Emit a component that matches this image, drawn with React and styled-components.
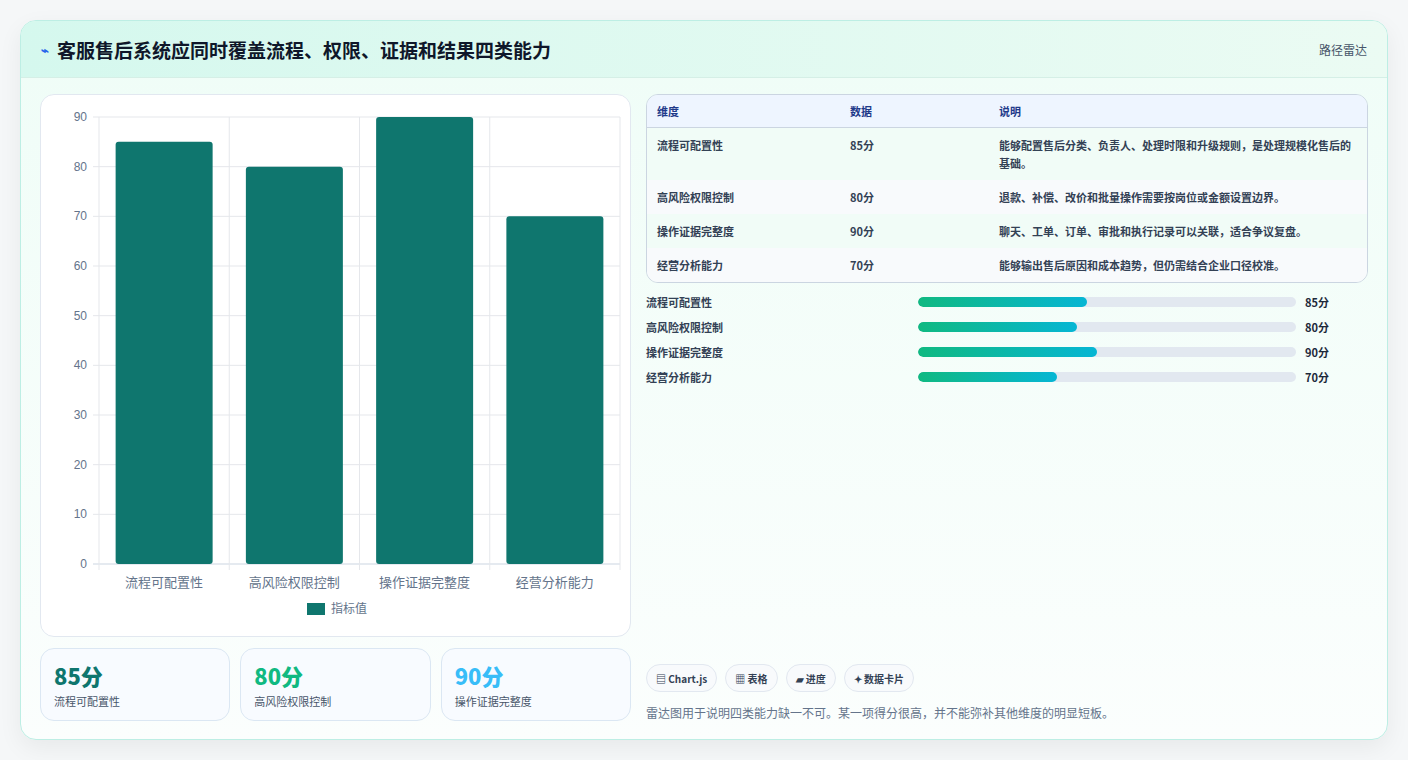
import React from "react";
import styled, { createGlobalStyle } from "styled-components";

const Global = createGlobalStyle`
  body { margin: 0; background: #f5f7f8; font-family: "Noto Sans CJK SC", "Noto Sans", sans-serif; }
`;

const rows = [
  { name: "流程可配置性", v: 85, desc: "能够配置售后分类、负责人、处理时限和升级规则，是处理规模化售后的基础。" },
  { name: "高风险权限控制", v: 80, desc: "退款、补偿、改价和批量操作需要按岗位或金额设置边界。" },
  { name: "操作证据完整度", v: 90, desc: "聊天、工单、订单、审批和执行记录可以关联，适合争议复盘。" },
  { name: "经营分析能力", v: 70, desc: "能够输出售后原因和成本趋势，但仍需结合企业口径校准。" },
];

function Chart() {
  const x0 = 58, x1 = 579, y0 = 22, y1 = 469;
  const h = (v) => ((y1 - y0) * v) / 90;
  const cw = (x1 - x0) / 4;
  return (
    <svg width="590" height="540" style={{ display: "block" }}>
      {[0, 10, 20, 30, 40, 50, 60, 70, 80, 90].map((t) => {
        const y = y1 - h(t);
        return (
          <g key={t}>
            <line x1={x0 - 6} x2={x1} y1={y} y2={y} stroke={t === 0 ? "#cbd5e1" : "#e5e7eb"} />
            <text x={x0 - 12} y={y + 4} fontSize="12" fill="#64748b" textAnchor="end" fontFamily="Liberation Sans, sans-serif">{t}</text>
          </g>
        );
      })}
      {[0, 1, 2, 3, 4].map((i) => (
        <line key={i} x1={x0 + cw * i} x2={x0 + cw * i} y1={y0} y2={y1 + 6} stroke="#e5e7eb" />
      ))}
      {rows.map((r, i) => (
        <g key={r.name}>
          <rect x={x0 + cw * i + 2 + (cw - 97) / 2 - 2} y={y1 - h(r.v)} width="97" height={h(r.v)} rx="3" fill="#0f766e" />
          <text x={x0 + cw * i + cw / 2} y={y1 + 23} fontSize="13" fill="#64748b" textAnchor="middle">{r.name}</text>
        </g>
      ))}
      <rect x="266" y="508" width="18" height="12" fill="#0f766e" />
      <text x="290" y="518" fontSize="12" fill="#64748b">指标值</text>
    </svg>
  );
}

export default function App() {
  return (
    <>
      <Global />
      <Page>
        <Card>
          <Header>
            <Title><Bolt>⌁</Bolt>客服售后系统应同时覆盖流程、权限、证据和结果四类能力</Title>
            <Tag>路径雷达</Tag>
          </Header>
          <Body>
            <Left>
              <ChartBox><Chart /></ChartBox>
              <Stats>
                <Stat><Big color="#0f766e">85分</Big><Small>流程可配置性</Small></Stat>
                <Stat><Big color="#10b981">80分</Big><Small>高风险权限控制</Small></Stat>
                <Stat><Big color="#38bdf8">90分</Big><Small>操作证据完整度</Small></Stat>
              </Stats>
            </Left>
            <Right>
              <Table>
                <thead>
                  <tr><Th w="173">维度</Th><Th w="129">数据</Th><Th>说明</Th></tr>
                </thead>
                <tbody>
                  {rows.map((r, i) => (
                    <Tr key={r.name} alt={i % 2 === 1}>
                      <Td>{r.name}</Td><Td>{r.v}分</Td><Td>{r.desc}</Td>
                    </Tr>
                  ))}
                </tbody>
              </Table>
              <Bars>
                {rows.map((r) => (
                  <BarRow key={r.name}>
                    <BarLabel>{r.name}</BarLabel>
                    <Track><Fill style={{ width: `${(r.v / 190) * 100}%` }} /></Track>
                    <BarVal>{r.v}分</BarVal>
                  </BarRow>
                ))}
              </Bars>
              <Spacer />
              <Chips>
                <Chip>▤ Chart.js</Chip><Chip>▦ 表格</Chip><Chip>▰ 进度</Chip><Chip>✦ 数据卡片</Chip>
              </Chips>
              <Note>雷达图用于说明四类能力缺一不可。某一项得分很高，并不能弥补其他维度的明显短板。</Note>
            </Right>
          </Body>
        </Card>
      </Page>
    </>
  );
}

const Page = styled.div`
  padding: 20px 20px 20px 20px;
  height: 760px;
  box-sizing: border-box;
`;
const Card = styled.div`
  height: 720px;
  box-sizing: border-box;
  border: 1px solid #bdeee4;
  border-radius: 16px;
  background: linear-gradient(180deg, #effdf7 0%, #fbfefd 100%);
  box-shadow: 0 8px 24px rgba(0,0,0,0.06);
  overflow: hidden;
  display: flex;
  flex-direction: column;
`;
const Header = styled.div`
  height: 56px;
  flex: none;
  display: flex;
  align-items: center;
  justify-content: space-between;
  padding: 0 20px 0 20px;
  background: linear-gradient(90deg, #d5f8ee, #ebfbf3);
  border-bottom: 1px solid #d5efe6;
`;
const Title = styled.h1`
  margin: 0;
  font-size: 19px;
  font-weight: 700;
  color: #0f172a;
  display: flex;
  align-items: center;
`;
const Bolt = styled.span`
  color: #2563eb;
  font-size: 13px;
  margin-right: 8px;
`;
const Tag = styled.span`
  font-size: 12px;
  color: #475569;
`;
const Body = styled.div`
  flex: 1;
  display: flex;
  gap: 15px;
  padding: 16px 19px 18px 19px;
  min-height: 0;
`;
const Left = styled.div`
  width: 591px;
  display: flex;
  flex-direction: column;
  gap: 11px;
`;
const ChartBox = styled.div`
  height: 543px;
  box-sizing: border-box;
  background: #fff;
  border: 1px solid #e2e8f0;
  border-radius: 14px;
`;
const Stats = styled.div`
  display: grid;
  grid-template-columns: repeat(3, 1fr);
  gap: 10px;
  height: 73px;
`;
const Stat = styled.div`
  border: 1px solid #dbe7f3;
  border-radius: 14px;
  background: #f8fbff;
  padding: 11px 13px;
  display: flex;
  flex-direction: column;
`;
const Big = styled.div`
  font-size: 22px;
  font-weight: 800;
  color: ${(p) => p.color};
  line-height: 30px;
`;
const Small = styled.div`
  font-size: 11px;
  color: #475569;
  margin-top: 3px;
`;
const Right = styled.div`
  flex: 1;
  display: flex;
  flex-direction: column;
`;
const Table = styled.table`
  width: 100%;
  border-collapse: separate;
  border-spacing: 0;
  border: 1px solid #cbd5e1;
  border-radius: 12px;
  overflow: hidden;
  font-size: 11px;
  color: #334155;
`;
const Th = styled.th`
  text-align: left;
  font-weight: 700;
  color: #1e3a8a;
  background: #eef5ff;
  height: 32px;
  padding: 0 10px;
  width: ${(p) => (p.w ? p.w + "px" : "auto")};
  border-bottom: 1px solid #cbd5e1;
`;
const Tr = styled.tr`
  background: ${(p) => (p.alt ? "#f8fafc" : "#f1fcf7")};
  & + & td { border-top: 1px solid #e2e8f0; }
`;
const Td = styled.td`
  padding: 8px 10px;
  line-height: 18px;
  vertical-align: top;
  font-weight: 600;
`;
const Bars = styled.div`
  display: flex;
  flex-direction: column;
  gap: 7px;
  margin-top: 10px;
`;
const BarRow = styled.div`
  display: flex;
  align-items: center;
  height: 18px;
`;
const BarLabel = styled.div`
  width: 272px;
  font-size: 11px;
  font-weight: 600;
  color: #334155;
`;
const Track = styled.div`
  width: 378px;
  height: 10px;
  background: #e2e8f0;
  border-radius: 5px;
  overflow: hidden;
`;
const Fill = styled.div`
  height: 100%;
  border-radius: 5px;
  background: linear-gradient(90deg, #10b981, #06b6d4);
`;
const BarVal = styled.div`
  margin-left: 9px;
  font-size: 11px;
  font-weight: 700;
  color: #1e293b;
`;
const Spacer = styled.div` flex: 1; `;
const Chips = styled.div`
  display: flex;
  gap: 8px;
`;
const Chip = styled.span`
  height: 28px;
  box-sizing: border-box;
  padding: 0 9px;
  display: flex;
  align-items: center;
  border: 1px solid #e2e8f0;
  border-radius: 14px;
  background: #f8fafc;
  font-size: 10px;
  font-weight: 600;
  color: #334155;
`;
const Note = styled.div`
  margin-top: 12px;
  font-size: 12px;
  color: #64748b;
`;
